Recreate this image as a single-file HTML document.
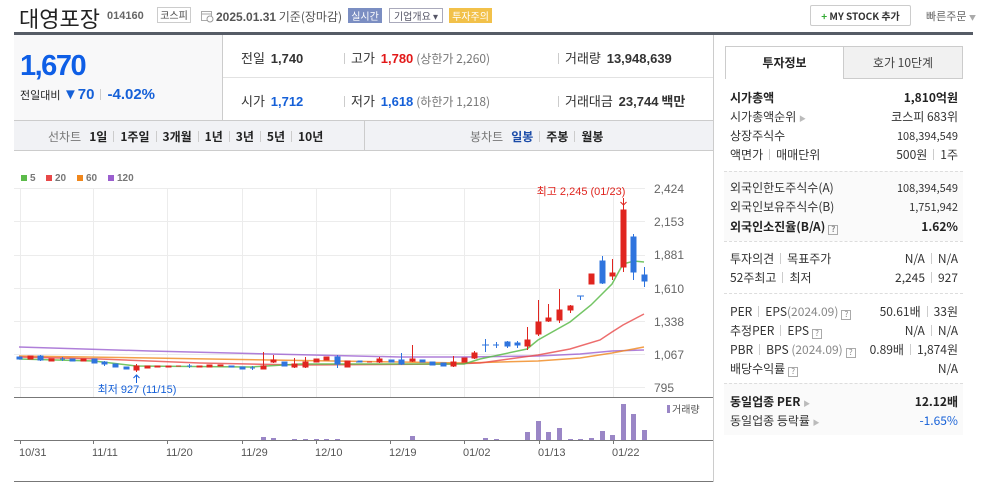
<!DOCTYPE html>
<html><head><meta charset="utf-8"><style>
*{margin:0;padding:0;box-sizing:border-box}
body{width:1003px;height:482px;overflow:hidden;background:#fff;font-family:"Liberation Sans","Noto Sans CJK KR",sans-serif;color:#333;position:relative}
.a{position:absolute;white-space:nowrap}
.k{font-family:"Noto Sans CJK KR","Liberation Sans",sans-serif}
.sep{display:inline-block;width:1px;height:11px;background:#ccc;margin:0 6px;vertical-align:-1px}
.rp .r{position:absolute;left:730px;width:228px;font-size:12px;height:18px;line-height:18px}
.rp .r span.v{position:absolute;right:0}
.q{display:inline-block;width:10px;height:10px;border:1px solid #aaa;font-size:8px;line-height:8px;text-align:center;color:#888;vertical-align:-1px;margin-left:3px}
</style></head><body>
<!-- header -->
<div class="a k" style="left:19px;top:2px;font-size:22px;color:#222">대영포장</div>
<div class="a" style="left:107px;top:10px;font-size:11px;font-weight:bold;color:#666">014160</div>
<div class="a k" style="left:157px;top:7px;width:34px;height:16px;border:1px solid #ccc;font-size:10px;line-height:14px;text-align:center;color:#444">코스피</div>
<svg class="a" style="left:201px;top:10px" width="13" height="13"><rect x="0.5" y="1.5" width="10" height="9" fill="#fff" stroke="#aaa"/><line x1="1" y1="4" x2="10" y2="4" stroke="#aaa"/><circle cx="9" cy="9" r="3" fill="#fff" stroke="#999"/></svg>
<div class="a k" style="left:216px;top:8px;font-size:12px;color:#555"><b style="font-family:'Liberation Sans'">2025.01.31</b> 기준(장마감)</div>
<div class="a k" style="left:348px;top:8px;width:34px;height:15px;background:#7b8ec2;color:#fff;font-size:10px;line-height:15px;text-align:center">실시간</div>
<div class="a k" style="left:389px;top:8px;width:54px;height:15px;border:1px solid #aab;color:#556;font-size:10px;line-height:13px;text-align:center">기업개요 ▾</div>
<div class="a k" style="left:449px;top:8px;width:43px;height:15px;background:#f2c14a;color:#fff;font-size:10px;line-height:15px;text-align:center">투자주의</div>
<div class="a k" style="left:810px;top:5px;width:101px;height:21px;border:1px solid #ccc;border-radius:2px;font-size:10px;line-height:19px;text-align:center;color:#333;font-weight:bold"><span style="color:#3a3">+</span> MY STOCK 추가</div>
<div class="a k" style="left:926px;top:8px;font-size:11px;color:#666">빠른주문 <span style="font-size:7px;color:#aaa">▼</span></div>
<div class="a" style="left:14px;top:32px;width:959px;height:3px;background:#565c66"></div>
<!-- price box -->
<div class="a" style="left:14px;top:35px;width:209px;height:85px;background:#f8f8f9;border-right:1px solid #ccc"></div>
<div class="a" style="left:20px;top:50px;font-size:29px;font-weight:bold;color:#0e5ee6;letter-spacing:-1.5px">1,670</div>
<div class="a k" style="left:20px;top:86px;font-size:11px;color:#222">전일대비 <span style="color:#1560d8;font-size:15px;font-weight:bold;font-family:'Liberation Sans'">▼70</span><span class="sep"></span><span style="color:#1560d8;font-size:15px;font-weight:bold;font-family:'Liberation Sans'">-4.02%</span></div>
<div class="a" style="left:223px;top:77px;width:490px;height:1px;background:#e2e2e2"></div>
<div class="a k" style="left:241px;top:48px;font-size:13px;color:#333">전일 &nbsp;<b style="font-family:'Liberation Sans'">1,740</b></div>
<div class="a k" style="left:344px;top:48px;font-size:13px;color:#333"><span class="sep" style="margin:0 6px 0 0"></span>고가 &nbsp;<b style="font-family:'Liberation Sans';color:#e21818">1,780</b> <span style="color:#777;font-size:12px">(상한가 2,260)</span></div>
<div class="a k" style="left:558px;top:48px;font-size:13px;color:#333"><span class="sep" style="margin:0 6px 0 0"></span>거래량 &nbsp;<b style="font-family:'Liberation Sans'">13,948,639</b></div>
<div class="a k" style="left:241px;top:91px;font-size:13px;color:#333">시가 &nbsp;<b style="font-family:'Liberation Sans';color:#1560d8">1,712</b></div>
<div class="a k" style="left:344px;top:91px;font-size:13px;color:#333"><span class="sep" style="margin:0 6px 0 0"></span>저가 &nbsp;<b style="font-family:'Liberation Sans';color:#1560d8">1,618</b> <span style="color:#777;font-size:12px">(하한가 1,218)</span></div>
<div class="a k" style="left:558px;top:91px;font-size:13px;color:#333"><span class="sep" style="margin:0 6px 0 0"></span>거래대금 &nbsp;<b style="font-family:'Liberation Sans'">23,744</b> <b>백만</b></div>
<!-- toolbar -->
<div class="a" style="left:14px;top:120px;width:699px;height:31px;background:#f1f2f5;border-top:1px solid #ccc;border-bottom:1px solid #ccc"></div>
<div class="a" style="left:364px;top:121px;width:1px;height:29px;background:#ccc"></div>
<div class="a k" style="left:48px;top:128px;font-size:12px;color:#222"><span style="color:#777">선차트</span> &nbsp; <b>1일</b><span class="sep"></span><b>1주일</b><span class="sep"></span><b>3개월</b><span class="sep"></span><b>1년</b><span class="sep"></span><b>3년</b><span class="sep"></span><b>5년</b><span class="sep"></span><b>10년</b></div>
<div class="a k" style="left:470px;top:128px;font-size:12px;color:#222"><span style="color:#777">봉차트</span> &nbsp; <b style="color:#1a4ba8">일봉</b><span class="sep"></span><b>주봉</b><span class="sep"></span><b>월봉</b></div>
<div class="a" style="left:713px;top:35px;width:1px;height:447px;background:#ccc"></div>
<!-- chart -->
<svg class="a" style="left:0;top:150px" width="713" height="332" viewBox="0 150 713 332" font-family="Liberation Sans" >
<g fill="#5cbb4a"><rect x="21" y="175" width="6" height="6"/></g><text x="30" y="181" font-size="10" font-weight="bold" fill="#777">5</text>
<rect x="46" y="175" width="6" height="6" fill="#e84848"/><text x="55" y="181" font-size="10" font-weight="bold" fill="#777">20</text>
<rect x="77" y="175" width="6" height="6" fill="#f0871c"/><text x="86" y="181" font-size="10" font-weight="bold" fill="#777">60</text>
<rect x="108" y="175" width="6" height="6" fill="#9b5fcf"/><text x="117" y="181" font-size="10" font-weight="bold" fill="#777">120</text>
<g stroke="#ececec" stroke-width="1">
<line x1="14" y1="188.5" x2="645" y2="188.5"/><line x1="14" y1="221.5" x2="645" y2="221.5"/><line x1="14" y1="255.5" x2="645" y2="255.5"/><line x1="14" y1="288.5" x2="645" y2="288.5"/><line x1="14" y1="321.5" x2="645" y2="321.5"/><line x1="14" y1="354.5" x2="645" y2="354.5"/><line x1="14" y1="387.5" x2="645" y2="387.5"/>
<line x1="20.5" y1="188" x2="20.5" y2="397"/><line x1="93.5" y1="188" x2="93.5" y2="397"/><line x1="167.5" y1="188" x2="167.5" y2="397"/><line x1="242.5" y1="188" x2="242.5" y2="397"/><line x1="316.5" y1="188" x2="316.5" y2="397"/><line x1="390.5" y1="188" x2="390.5" y2="397"/><line x1="464.5" y1="188" x2="464.5" y2="397"/><line x1="539.5" y1="188" x2="539.5" y2="397"/><line x1="613.5" y1="188" x2="613.5" y2="397"/>
</g>
<g font-size="12" fill="#666"><text x="654" y="193">2,424</text><text x="654" y="226">2,153</text><text x="654" y="259">1,881</text><text x="654" y="293">1,610</text><text x="654" y="326">1,338</text><text x="654" y="359">1,067</text><text x="654" y="392">795</text></g>
<line x1="14" y1="397.5" x2="713" y2="397.5" stroke="#777"/>
<line x1="14" y1="440.5" x2="713" y2="440.5" stroke="#777"/>
<line x1="14" y1="481.5" x2="713" y2="481.5" stroke="#777"/>
<g stroke="#777"><line x1="20.5" y1="440" x2="20.5" y2="444"/><line x1="93.5" y1="440" x2="93.5" y2="444"/><line x1="167.5" y1="440" x2="167.5" y2="444"/><line x1="242.5" y1="440" x2="242.5" y2="444"/><line x1="316.5" y1="440" x2="316.5" y2="444"/><line x1="390.5" y1="440" x2="390.5" y2="444"/><line x1="464.5" y1="440" x2="464.5" y2="444"/><line x1="539.5" y1="440" x2="539.5" y2="444"/><line x1="613.5" y1="440" x2="613.5" y2="444"/></g>
<g font-size="11" fill="#555"><text x="19" y="456">10/31</text><text x="92" y="456">11/11</text><text x="166" y="456">11/20</text><text x="241" y="456">11/29</text><text x="315" y="456">12/10</text><text x="389" y="456">12/19</text><text x="463" y="456">01/02</text><text x="538" y="456">01/13</text><text x="612" y="456">01/22</text></g>
<!-- MAs -->
<polyline fill="none" stroke="#9b5fcf" stroke-width="1.5" opacity=".8" points="19,347 150,351 270,354 400,357 464,357 538,356 580,354 612,351 644,350"/>
<polyline fill="none" stroke="#f0871c" stroke-width="1.5" opacity=".8" points="19,356 150,358 270,360 400,362 464,363 538,361 580,358 612,353 644,347"/>
<polyline fill="none" stroke="#e84848" stroke-width="1.5" opacity=".8" points="19,357 100,359 200,363 300,365 450,364 480,363 538,355 570,349 600,340 612,332 623,325 644,314"/>
<polyline fill="none" stroke="#5cbb4a" stroke-width="1.5" opacity=".85" points="19,359 94,361 136,366 250,367 300,364 464,364 480,359 527,349 538,340 570,322 591,305 612,284 623,264 634,261 644,262"/>
<!-- candles -->
<g stroke-width="1">
<g fill="#e0251f" stroke="#e0251f">
<rect x="28" y="356" width="5" height="3"/><rect x="49" y="359" width="5" height="2"/><rect x="81" y="359" width="5" height="2"/><line x1="136.5" y1="364" x2="136.5" y2="372"/><rect x="134" y="366" width="5" height="4"/><rect x="145" y="366" width="5" height="2"/><rect x="155" y="366" width="5" height="1"/><rect x="166" y="366" width="5" height="1"/><line x1="176" y1="366" x2="181" y2="366"/><rect x="197" y="366" width="5" height="1"/><rect x="207" y="365" width="5" height="2"/><rect x="218" y="365" width="5" height="1"/>
<line x1="263.5" y1="352" x2="263.5" y2="369"/><rect x="261" y="366" width="5" height="3"/><line x1="273.5" y1="355" x2="273.5" y2="363"/><rect x="271" y="360" width="5" height="2"/><line x1="294.5" y1="358" x2="294.5" y2="368"/><rect x="292" y="364" width="5" height="3"/><line x1="305.5" y1="357" x2="305.5" y2="368"/><rect x="303" y="362" width="5" height="5"/><rect x="314" y="359" width="5" height="3"/><rect x="324" y="357" width="5" height="3"/><rect x="345" y="361" width="5" height="6"/>
<line x1="367" y1="362" x2="372" y2="362"/><line x1="379.5" y1="357" x2="379.5" y2="363"/><rect x="377" y="359" width="5" height="3"/><line x1="412.5" y1="345" x2="412.5" y2="362"/><rect x="410" y="359" width="5" height="2"/><line x1="453.5" y1="356" x2="453.5" y2="367"/><rect x="451" y="362" width="5" height="4"/><rect x="462" y="358" width="5" height="4"/><line x1="474.5" y1="351" x2="474.5" y2="359"/><rect x="472" y="353" width="5" height="5"/>
<line x1="527.5" y1="327" x2="527.5" y2="350"/><rect x="525" y="340" width="5" height="6"/><line x1="538.5" y1="300" x2="538.5" y2="336"/><rect x="536" y="322" width="5" height="12"/><line x1="548.5" y1="304" x2="548.5" y2="322"/><rect x="546" y="318" width="5" height="3"/><line x1="559.5" y1="289" x2="559.5" y2="323"/><rect x="557" y="310" width="5" height="10"/><line x1="570.5" y1="305" x2="570.5" y2="313"/><rect x="568" y="306" width="5" height="4"/><rect x="589" y="274" width="5" height="10"/><line x1="612.5" y1="259" x2="612.5" y2="280"/><rect x="610" y="273" width="5" height="3"/><line x1="623.5" y1="205" x2="623.5" y2="272"/><rect x="621" y="210" width="5" height="57"/>
</g>
<g fill="#2f74de" stroke="#2f74de">
<rect x="17" y="357" width="5" height="2"/><rect x="38" y="356" width="5" height="4"/><line x1="40.5" y1="355" x2="40.5" y2="361"/><line x1="60" y1="359" x2="65" y2="359"/><line x1="62.5" y1="357" x2="62.5" y2="361"/><rect x="70" y="359" width="5" height="2"/><rect x="92" y="359" width="5" height="4"/><rect x="102" y="362" width="5" height="2"/><line x1="104.5" y1="361" x2="104.5" y2="366"/><rect x="113" y="364" width="5" height="3"/><rect x="124" y="367" width="5" height="2"/><line x1="187" y1="366" x2="192" y2="366"/><line x1="189.5" y1="364" x2="189.5" y2="368"/><rect x="229" y="366" width="5" height="1"/><rect x="240" y="367" width="5" height="2"/><line x1="250" y1="368" x2="255" y2="368"/><line x1="252.5" y1="366" x2="252.5" y2="370"/><rect x="282" y="362" width="5" height="4"/><line x1="337.5" y1="355" x2="337.5" y2="368"/><rect x="335" y="357" width="5" height="7"/><line x1="356" y1="362" x2="361" y2="362"/>
<rect x="358" y="361" width="4" height="1"/><rect x="389" y="360" width="5" height="2"/><line x1="401.5" y1="353" x2="401.5" y2="365"/><rect x="399" y="360" width="5" height="4"/><rect x="420" y="360" width="5" height="2"/><rect x="430" y="362" width="5" height="3"/><rect x="441" y="363" width="5" height="3"/>
<line x1="482" y1="345" x2="489" y2="345"/><line x1="485.5" y1="339" x2="485.5" y2="352"/><line x1="493" y1="345" x2="499" y2="345"/><line x1="496.5" y1="342" x2="496.5" y2="348"/><rect x="505" y="342" width="5" height="4"/><line x1="507.5" y1="341" x2="507.5" y2="348"/><rect x="515" y="343" width="5" height="2"/><line x1="517.5" y1="341" x2="517.5" y2="348"/><line x1="577" y1="296" x2="584" y2="296"/><line x1="580.5" y1="296" x2="580.5" y2="300"/><line x1="602.5" y1="256" x2="602.5" y2="284"/><rect x="600" y="261" width="5" height="22"/><line x1="633.5" y1="234" x2="633.5" y2="280"/><rect x="631" y="237" width="5" height="35"/><line x1="644.5" y1="267" x2="644.5" y2="287"/><rect x="642" y="275" width="5" height="6"/>
</g>
</g>
<!-- annotations -->
<text x="581" y="195" font-size="11" fill="#e0251f" text-anchor="middle" font-family="Liberation Sans,Noto Sans CJK KR">최고 2,245 (01/23)</text>
<path d="M623.5 198v7M620.5 202l3 3 3-3" stroke="#e0251f" fill="none"/>
<text x="137" y="393" font-size="11" fill="#1560d8" text-anchor="middle" font-family="Liberation Sans,Noto Sans CJK KR">최저 927 (11/15)</text>
<path d="M136.5 375v8M133.5 378l3-3 3 3" stroke="#1560d8" fill="none"/>
<!-- volume -->
<g fill="#9a86c6">
<rect x="261" y="437" width="5" height="3"/><rect x="271" y="438" width="5" height="2"/><rect x="292" y="439" width="5" height="1"/><rect x="303" y="439" width="5" height="1"/><rect x="314" y="439" width="5" height="1"/><rect x="324" y="439" width="5" height="1"/><rect x="335" y="439" width="5" height="1"/>
<rect x="410" y="436" width="5" height="4"/><rect x="483" y="438" width="5" height="2"/><rect x="494" y="439" width="5" height="1"/><rect x="525" y="432" width="5" height="8"/><rect x="536" y="421" width="5" height="19"/><rect x="546" y="432" width="5" height="8"/><rect x="557" y="428" width="5" height="12"/><rect x="568" y="439" width="5" height="1"/><rect x="578" y="439" width="5" height="1"/><rect x="589" y="438" width="5" height="2"/><rect x="600" y="431" width="5" height="9"/><rect x="610" y="435" width="5" height="5"/><rect x="621" y="404" width="5" height="36"/><rect x="631" y="414" width="5" height="26"/><rect x="642" y="430" width="5" height="10"/>
<rect x="667" y="405" width="3" height="8"/></g>
<text x="672" y="413" font-size="10" fill="#555" font-family="Noto Sans CJK KR">거래량</text>
</svg>
<!-- right panel -->
<div class="a k" style="left:725px;top:46px;width:119px;height:33px;border:1px solid #ccc;border-bottom:none;background:#fff;font-size:12px;font-weight:bold;line-height:31px;text-align:center;color:#222">투자정보</div>
<div class="a k" style="left:843px;top:46px;width:120px;height:33px;border:1px solid #ccc;background:#f1f1f1;font-size:12px;line-height:31px;text-align:center;color:#444">호가 10단계</div>
<div class="rp k">
<div class="a" style="left:724px;top:171px;width:239px;height:70px;background:#fafafa;border-top:1px dashed #ddd"></div>
<div class="a" style="left:724px;top:241px;width:239px;height:1px;border-top:1px dashed #ddd"></div>
<div class="a" style="left:724px;top:293px;width:239px;height:1px;border-top:1px dashed #ddd"></div>
<div class="a" style="left:724px;top:383px;width:239px;height:52px;background:#fafafa;border-top:1px dashed #ddd"></div>
<div class="r" style="top:89px;font-weight:bold;color:#222">시가총액<span class="v">1,810억원</span></div>
<div class="r" style="top:108px">시가총액순위 <span style="font-size:7px;color:#bbb">▶</span><span class="v">코스피 683위</span></div>
<div class="r" style="top:127px">상장주식수<span class="v" style="font-size:11px">108,394,549</span></div>
<div class="r" style="top:146px">액면가<span class="sep"></span>매매단위<span class="v">500원<span class="sep"></span>1주</span></div>
<div class="r" style="top:179px">외국인한도주식수(A)<span class="v" style="font-size:11px">108,394,549</span></div>
<div class="r" style="top:198px">외국인보유주식수(B)<span class="v" style="font-size:11px">1,751,942</span></div>
<div class="r" style="top:218px;font-weight:bold;color:#222">외국인소진율(B/A)<span class="q">?</span><span class="v">1.62%</span></div>
<div class="r" style="top:250px">투자의견<span class="sep"></span>목표주가<span class="v">N/A<span class="sep"></span>N/A</span></div>
<div class="r" style="top:269px">52주최고<span class="sep"></span>최저<span class="v">2,245<span class="sep"></span>927</span></div>
<div class="r" style="top:303px">PER<span class="sep"></span>EPS<span style="color:#888">(2024.09)</span><span class="q">?</span><span class="v">50.61배<span class="sep"></span>33원</span></div>
<div class="r" style="top:322px">추정PER<span class="sep"></span>EPS<span class="q">?</span><span class="v">N/A<span class="sep"></span>N/A</span></div>
<div class="r" style="top:341px">PBR<span class="sep"></span>BPS <span style="color:#888">(2024.09)</span><span class="q">?</span><span class="v">0.89배<span class="sep"></span>1,874원</span></div>
<div class="r" style="top:360px">배당수익률<span class="q">?</span><span class="v">N/A</span></div>
<div class="r" style="top:393px;font-weight:bold;color:#222">동일업종 PER <span style="font-size:7px;color:#bbb">▶</span><span class="v">12.12배</span></div>
<div class="r" style="top:412px">동일업종 등락률 <span style="font-size:7px;color:#bbb">▶</span><span class="v" style="color:#1560d8">-1.65%</span></div>
</div>
</body></html>
